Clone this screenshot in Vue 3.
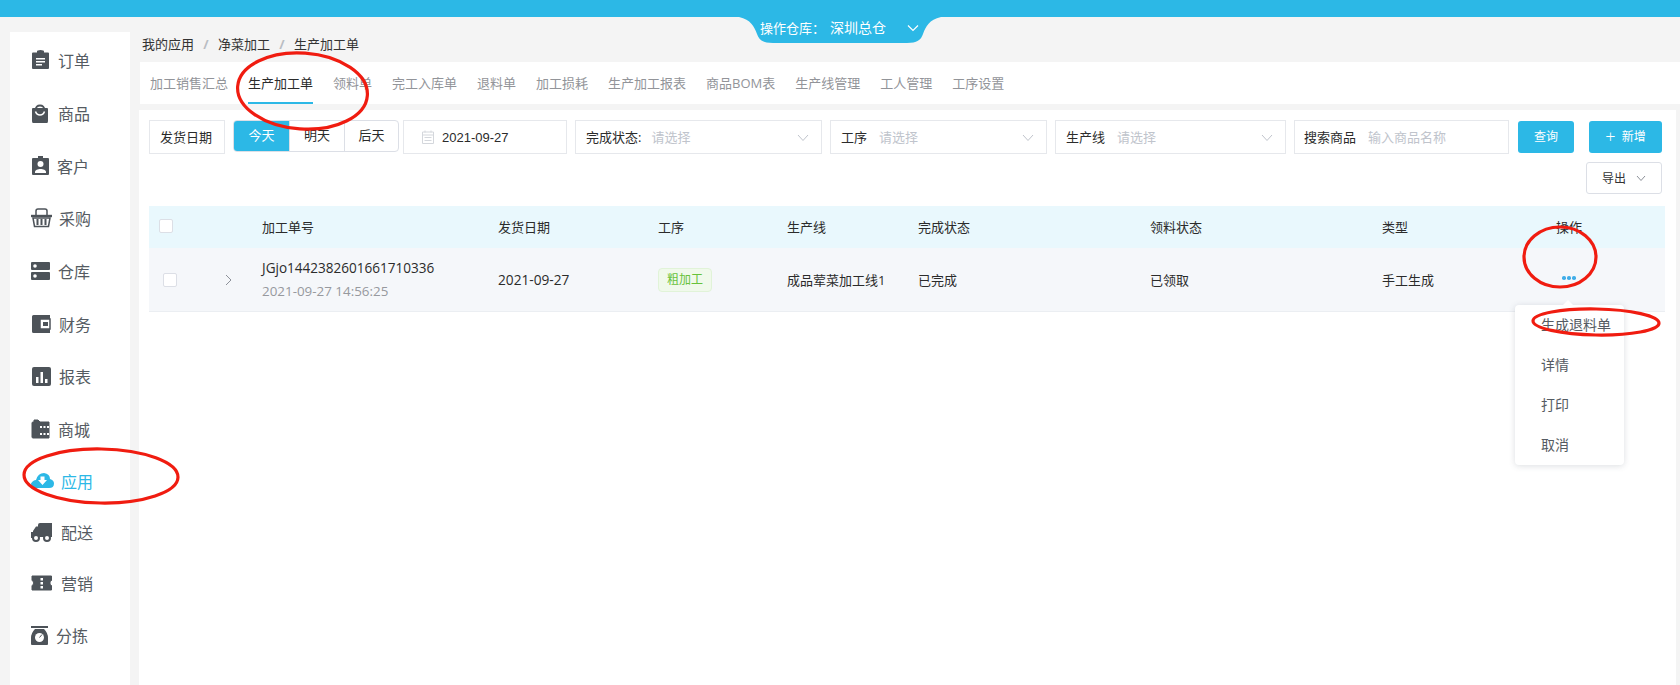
<script setup>
const nav = [
  { key: 'order', label: '订单', w: 19, gap: 8 },
  { key: 'goods', label: '商品', w: 18, gap: 9 },
  { key: 'client', label: '客户', w: 19, gap: 7 },
  { key: 'buy', label: '采购', w: 21, gap: 7 },
  { key: 'store', label: '仓库', w: 19, gap: 8 },
  { key: 'money', label: '财务', w: 20, gap: 8 },
  { key: 'report', label: '报表', w: 20, gap: 8 },
  { key: 'mall', label: '商城', w: 19, gap: 8 },
  { key: 'app', label: '应用', w: 23, gap: 7, active: true },
  { key: 'ship', label: '配送', w: 21, gap: 9 },
  { key: 'sale', label: '营销', w: 21, gap: 9 },
  { key: 'sort', label: '分拣', w: 17, gap: 8 }
]
const tabs = ['加工销售汇总', '生产加工单', '领料单', '完工入库单', '退料单', '加工损耗', '生产加工报表', '商品BOM表', '生产线管理', '工人管理', '工序设置']
const heads = ['加工单号', '发货日期', '工序', '生产线', '完成状态', '领料状态', '类型', '操作']
const menu = ['生成退料单', '详情', '打印', '取消']
</script>

<template>
  <div class="page">
    <header class="top"></header>
    <div class="wh">
      <svg class="wh-bg" width="202" height="26" viewBox="0 0 202 26"><path d="M0 0H202C190 3 187 9 184 17C182 23 178 26 168 26H34C24 26 20 23 18 17C15 9 12 3 0 0Z" fill="#2cb8e6"/></svg>
      <span class="wh-text">操作仓库：</span><span class="wh-text wh-name">深圳总仓</span>
      <svg class="wh-chev" width="12" height="8" viewBox="0 0 12 8"><path d="M1 1.500L6 6.500L11 1.500" fill="none" stroke="#fff" stroke-width="1.200"/></svg>
    </div>
    <div class="body">
      <aside class="side">
        <div v-for="n in nav" :key="n.key" class="nav" :class="{ on: n.active }">
          <svg class="ico" :style="{ width: n.w + 'px', marginRight: n.gap + 'px' }" :viewBox="`0 0 ${n.w} 20`">
            <g v-if="n.key === 'order'" fill="#4d5359"><path d="M1 3.500Q1 2.500 2 2.500H6V1.500Q6 0 9.500 0T13 1.500V2.500H17Q18 2.500 18 3.500V18Q18 19 17 19H2Q1 19 1 18Z"/><path d="M5 8H14V9.500H5ZM5 11H14V12.500H5ZM5 14H11V15.500H5Z" fill="#fff"/></g>
            <g v-else-if="n.key === 'goods'"><path d="M1 6Q1 5 2 5H16Q17 5 17 6V18Q17 20 16 20H2Q1 20 1 18Z" fill="#4d5359"/><path d="M5 7C3.500 1 14.500 1 13 7" fill="none" stroke="#4d5359" stroke-width="2"/><path d="M4.500 8.500C6 13 12 13 13.500 8.500" fill="none" stroke="#fff" stroke-width="1.500"/></g>
            <g v-else-if="n.key === 'client'"><path d="M1 3Q1 2 2 2H7V0H12V2H17Q18 2 18 3V18Q18 19 17 19H2Q1 19 1 18Z" fill="#4d5359"/><circle cx="9.500" cy="8" r="3" fill="#fff"/><path d="M4 16C4 12 15 12 15 16V17H4Z" fill="#fff"/></g>
            <g v-else-if="n.key === 'buy'" fill="none" stroke="#4d5359"><path d="M5 8V3Q5 1 7 1H14Q16 1 16 3V8" stroke-width="1.500"/><path d="M0 8H21" stroke-width="2.400"/><path d="M2 10L3.500 18.500H17.500L19 10Z" stroke-width="1.500"/><path d="M6.500 11V17M10.500 11V17M14.500 11V17" stroke-width="2"/></g>
            <g v-else-if="n.key === 'store'"><rect x="0" y="1" width="19" height="8" rx="1" fill="#4d5359"/><rect x="0" y="11" width="19" height="8" rx="1" fill="#4d5359"/><circle cx="4" cy="5" r="1.800" fill="#fff"/><circle cx="4" cy="15" r="1.800" fill="#fff"/></g>
            <g v-else-if="n.key === 'money'"><path d="M1 2.500Q1 1 2.500 1H19V5H9V15H19V19H2.500Q1 19 1 17.500Z" fill="#4d5359"/><path d="M9 5H19V15H9Z" fill="none" stroke="#4d5359" stroke-width="1.500"/><rect x="12" y="8" width="5" height="4" fill="#4d5359"/></g>
            <g v-else-if="n.key === 'report'"><rect x="1" y="1" width="19" height="19" rx="2" fill="#4d5359"/><path d="M5 11H7.500V17H5ZM9.500 6H12V17H9.500ZM14 13H16.500V17H14Z" fill="#fff"/></g>
            <g v-else-if="n.key === 'mall'"><path d="M1 4Q1 3 2 3H3V1H7L9 3H18V19H2Q1 19 1 18Z" fill="#4d5359" stroke="#4d5359" stroke-linejoin="round"/><path d="M9 7H11V9H9ZM12.500 7H14.500V9H12.500ZM16 7H18V9H16ZM9 14H11V16H9ZM12.500 14H14.500V16H12.500ZM16 14H18V16H16Z" fill="#fff"/></g>
            <g v-else-if="n.key === 'app'"><path d="M4 17Q0 16 0 12.500Q2 9 5 9Q7 2 13 2Q19 3 19 8Q23 9 23 12.500Q23 17 18 17Z" fill="#2cb8e6"/><path d="M9.500 5.500H13.500V9H16L11.500 14L7 9H9.500Z" fill="#fff"/></g>
            <g v-else-if="n.key === 'ship'"><path d="M7 3Q7 1 9 1H21V15H2V9L5 4.500H7Z" fill="#4d5359"/><path d="M0 10H3V16H0Z" fill="#4d5359"/><circle cx="5" cy="16" r="3" fill="#fff" stroke="#4d5359" stroke-width="2"/><circle cx="16" cy="16" r="3" fill="#fff" stroke="#4d5359" stroke-width="2"/></g>
            <g v-else-if="n.key === 'sale'"><path d="M1 3H20.500V7.500C18.500 8 18.500 12 20.500 12.500V17H1V12.500C3 12 3 8 1 7.500Z" fill="#4d5359" stroke="#4d5359" stroke-linejoin="round"/><path d="M9.500 5H12V7.500H9.500ZM9.500 9H12V11.500H9.500ZM9.500 13H12V15.500H9.500Z" fill="#fff"/></g>
            <g v-else><path d="M0 1H17V3H0Z" fill="#4d5359"/><path d="M4 4H13Q17 8 17 13V19Q17 20 16 20H1Q0 20 0 19V13Q0 8 4 4Z" fill="#4d5359"/><circle cx="8.500" cy="12.500" r="4.500" fill="#fff"/><path d="M8.500 12.500L11 9.500" stroke="#4d5359"/></g>
          </svg>
          <span>{{ n.label }}</span>
        </div>
      </aside>
      <main class="main">
        <nav class="crumb"><span>我的应用</span><i>/</i><span>净菜加工</span><i>/</i><span>生产加工单</span></nav>
        <div class="tabs">
          <span v-for="t in tabs" :key="t" class="tab" :class="{ active: t === '生产加工单' }">{{ t }}</span>
        </div>
        <section class="panel">
          <div class="filters">
            <div class="box date-label">发货日期</div>
            <div class="seg"><span class="seg-on">今天</span><span class="seg-mid">明天</span><span>后天</span></div>
            <div class="box date">
              <svg width="12" height="14" viewBox="0 0 12 14"><path d="M.500 2H11.500V13.500H.500ZM.500 5H11.500M3 .500V2.500M9 .500V2.500M2.500 7.500H9.500M2.500 10.500H9.500" fill="none" stroke="#d4d7dc"/></svg>
              <span class="date-v">2021-09-27</span>
            </div>
            <div class="box sel s1"><b>完成状态:</b><em>请选择</em><svg class="dn" width="12" height="8" viewBox="0 0 12 8"><path d="M1 1L6 6.500L11 1" fill="none" stroke="#c0c4cc"/></svg></div>
            <div class="box sel s2"><b>工序</b><em>请选择</em><svg class="dn" width="12" height="8" viewBox="0 0 12 8"><path d="M1 1L6 6.500L11 1" fill="none" stroke="#c0c4cc"/></svg></div>
            <div class="box sel s3"><b>生产线</b><em>请选择</em><svg class="dn" width="12" height="8" viewBox="0 0 12 8"><path d="M1 1L6 6.500L11 1" fill="none" stroke="#c0c4cc"/></svg></div>
            <div class="box sel s4"><b>搜索商品</b><em>输入商品名称</em></div>
            <div class="btn query">查询</div>
            <div class="btn add"><span class="plus">+</span>新增</div>
          </div>
          <div class="export-row">
            <div class="export">导出<svg width="10" height="7" viewBox="0 0 10 7"><path d="M1 1L5 5.500L9 1" fill="none" stroke="#8d9199"/></svg></div>
          </div>
          <div class="table">
            <div class="grid thead">
              <div class="c0"><span class="check"></span></div>
              <div v-for="h in heads" :key="h">{{ h }}</div>
            </div>
            <div class="grid tbody">
              <div class="c0 c0-row"><span class="check"></span><svg width="7" height="12" viewBox="0 0 7 12"><path d="M1 1L6 6L1 11" fill="none" stroke="#8d9199"/></svg></div>
              <div class="idcell"><div>JGjo1442382601661710336</div><div class="time">2021-09-27 14:56:25</div></div>
              <div class="num">2021-09-27</div>
              <div><span class="tag">粗加工</span></div>
              <div>成品荤菜加工线1</div>
              <div>已完成</div>
              <div>已领取</div>
              <div>手工生成</div>
              <div class="dots"><i></i><i></i><i></i></div>
            </div>
          </div>
        </section>
      </main>
    </div>
    <div class="pop">
      <span class="pop-arrow"></span>
      <div v-for="m in menu" :key="m" class="pop-item">{{ m }}</div>
    </div>
    <svg class="marks" width="1680" height="685" viewBox="0 0 1680 685">
      <g fill="none" stroke="#f01c10" stroke-width="3.200">
        <ellipse cx="302.500" cy="91" rx="65" ry="38" transform="rotate(4 302.500 91)"/>
        <ellipse cx="1560" cy="257" rx="36" ry="30"/>
        <ellipse cx="1596" cy="322" rx="63" ry="13" transform="rotate(1 1596 322)"/>
        <ellipse cx="101" cy="476" rx="77" ry="27" transform="rotate(1 101 476)"/>
      </g>
    </svg>
  </div>
</template>

<style>
html, body { margin: 0; background: #f4f4f4; }
</style>

<style scoped>
.page { position: relative; width: 1680px; height: 685px; overflow: hidden; background: #f4f4f4; color: #2b2b2b; font: 13px "Open Sans", "Noto Sans CJK SC", sans-serif; }
.top { height: 17px; background: #2cb8e6; }
.wh { position: absolute; left: 739px; top: 17px; width: 202px; height: 26px; color: #fff; display: flex; align-items: center; padding-bottom: 4px; box-sizing: border-box; }
.wh-bg { position: absolute; left: 0; top: 0; }
.wh-text { position: relative; line-height: 18px; }
.wh-text:first-of-type { margin-left: 21px; }
.wh-name { margin-left: 5px; font-size: 14px; }
.wh-chev { position: relative; margin-left: 21px; }
.body { display: flex; height: 668px; }
.side { width: 120px; margin: 15px 0 0 10px; padding-top: 2px; background: #fff; box-sizing: border-box; }
.nav { height: 52.700px; display: flex; align-items: center; padding-left: 21px; font-size: 16px; color: #555b62; }
.nav:nth-child(n+9) { height: 51.200px; }
.nav.on { color: #2cb8e6; }
.ico { height: 20px; flex: none; }
.main { width: 1541px; margin-left: 9px; display: flex; flex-direction: column; }
.crumb { height: 45px; box-sizing: border-box; padding: 18px 0 0 3px; line-height: 18px; display: flex; color: #333; }
.crumb i { font-style: normal; color: #b9bdc3; width: 24px; text-align: center; font-weight: 700; }
.tabs { margin-left: 1px; height: 42px; background: #fff; display: flex; gap: 20px; padding-left: 10px; color: #929499; }
.tab { line-height: 42px; box-sizing: border-box; height: 42px; white-space: nowrap; }
.tab.active { color: #2b2b2b; border-bottom: 2px solid #2cb8e6; }
.panel { flex: 1; margin: 6px 4px 0 0; background: #fff; padding: 10px 11px 0 10px; }
.filters { display: flex; align-items: flex-start; }
.box { box-sizing: border-box; height: 34px; border: 1px solid #e6e8ec; display: flex; align-items: center; flex: none; padding-bottom: 2px; }
.date-label { width: 76px; padding-left: 10px; }
.seg { margin-left: 8px; width: 166px; height: 32px; border: 1px solid #dcdfe6; border-radius: 4px; box-sizing: border-box; display: flex; overflow: hidden; }
.seg span { flex: 1; text-align: center; line-height: 29px; border-left: 1px solid #dcdfe6; }
.seg .seg-on { flex: 0 0 55px; background: #2cb8e6; color: #fff; border-left: 0; }
.seg .seg-mid { flex: 0 0 54px; }
.date { width: 164px; margin-left: 4px; padding-left: 18px; gap: 8px; color: #2b2b2b; padding-bottom: 0; }
.date-v { font-family: "Liberation Sans", sans-serif; }
.sel { margin-left: 8px; position: relative; padding-left: 10px; }
.sel b { font-weight: 400; color: #2b2b2b; }
.sel em { font-style: normal; color: #c0c4cc; margin-left: 12px; }
.s1 { width: 247px; }
.s1 em { margin-left: 10px; }
.s2 { width: 217px; }
.s3 { width: 231px; }
.s4 { width: 215px; padding-left: 9px; }
.dn { position: absolute; right: 12px; top: 13px; }
.btn { box-sizing: border-box; height: 32px; margin-top: 1px; border-radius: 3px; background: #2cb8e6; color: #fff; display: flex; align-items: center; justify-content: center; flex: none; font-size: 12px; padding-bottom: 2px; }
.query { width: 56px; margin-left: 9px; }
.add { width: 73px; margin-left: 15px; }
.plus { font-size: 18px; font-weight: 300; margin-right: 6px; line-height: 18px; }
.export-row { display: flex; justify-content: flex-end; margin-top: 8px; padding-right: 3px; }
.export { box-sizing: border-box; width: 76px; height: 32px; border: 1px solid #dcdfe6; border-radius: 3px; display: flex; align-items: center; justify-content: center; gap: 10px; font-size: 12px; color: #333; }
.table { margin-top: 12px; width: 1516px; }
.grid { display: grid; grid-template-columns: 113px 236px 160px 129px 131px 232px 232px 174px 109px; align-items: center; }
.thead { height: 42px; background: #e9f8fd; padding-bottom: 2px; box-sizing: border-box; }
.tbody { height: 64px; background: #f5f7fa; border-bottom: 1px solid #ebeef2; box-sizing: border-box; }
.c0 { display: flex; align-items: center; padding-left: 10px; }
.c0-row { padding-left: 14px; }
.c0-row svg { margin-left: 48px; }
.check { width: 14px; height: 14px; box-sizing: border-box; border: 1px solid #dcdfe6; border-radius: 2px; background: #fff; display: block; flex: none; }
.idcell { line-height: 23px; font-size: 13.550px; }
.time { color: #97999e; font-size: 13.400px; }
.num { font-size: 13.700px; }
.tag { display: inline-block; box-sizing: border-box; width: 54px; height: 24px; line-height: 21px; text-align: center; font-size: 12px; color: #67c23a; background: #f0f9eb; border: 1px solid #e1f3d8; border-radius: 4px; }
.dots { display: flex; gap: 1.500px; margin-top: -3px; padding-left: 6px; }
.dots i { width: 3.500px; height: 3.500px; border-radius: 50%; background: #40ade8; }
.pop { position: absolute; left: 1515px; top: 305px; width: 109px; height: 160px; background: #fff; border-radius: 4px; box-shadow: 0 1px 6px rgba(60, 70, 90, .18); color: #555b62; font-size: 14px; }
.pop-arrow { position: absolute; left: 47px; top: -5px; width: 0; height: 0; border: 6px solid transparent; border-top: 0; border-bottom-color: #fff; }
.pop-item { height: 40px; line-height: 40px; padding-left: 26px; }
.marks { position: absolute; left: 0; top: 0; pointer-events: none; }
</style>
